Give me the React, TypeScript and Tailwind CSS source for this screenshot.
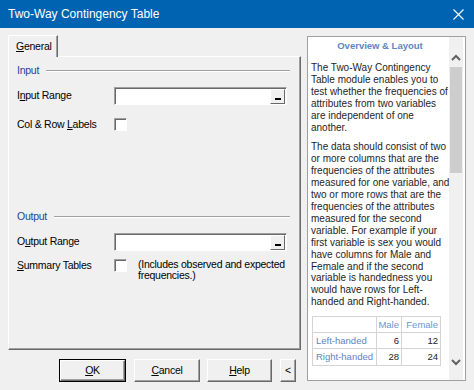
import React from "react";

const sans = { fontFamily: '"Liberation Sans", Arial, sans-serif' };

function Btn({ children, w, def }: { children: React.ReactNode; w: string; def?: boolean }) {
  const inner = (
    <div className="flex h-full w-full items-center justify-center border border-t-white border-l-white border-r-[#696969] border-b-[#696969] bg-[#f0f0f0] shadow-[inset_-1px_-1px_0_#a0a0a0]">
      {children}
    </div>
  );
  if (def) return <div className={`${w} h-[23px] border border-black`}>{inner}</div>;
  return <div className={`${w} h-[23px]`}>{inner}</div>;
}

function RangeBox() {
  return (
    <div className="flex h-[18px] w-[173px] items-center justify-end border border-t-[#a0a0a0] border-l-[#a0a0a0] border-r-white border-b-white bg-white shadow-[inset_1px_1px_0_#696969]">
      <div className="mr-[1px] flex h-[15px] w-[15px] items-end justify-center border border-t-white border-l-white border-r-[#696969] border-b-[#696969] bg-[#f0f0f0] pb-[3px]">
        <div className="h-[2px] w-[6px] bg-black" />
      </div>
    </div>
  );
}

function Check() {
  return (
    <div className="h-[13px] w-[13px] border border-t-[#a0a0a0] border-l-[#a0a0a0] border-r-white border-b-white bg-white shadow-[inset_1px_1px_0_#696969]" />
  );
}

function Heading({ t }: { t: string }) {
  return (
    <div className="flex h-[14px] items-center">
      <span className="text-[#24449b]">{t}</span>
      <div className="ml-[7px] flex-1 border-t border-b border-t-[#a0a0a0] border-b-white" />
    </div>
  );
}

export default function App() {
  const p1 = [
    "The Two-Way Contingency",
    "Table module enables you to",
    "test whether the frequencies of",
    "attributes from two variables",
    "are independent of one",
    "another.",
  ];
  const p2 = [
    "The data should consist of two",
    "or more columns that are the",
    "frequencies of the attributes",
    "measured for one variable, and",
    "two or more rows that are the",
    "frequencies of the attributes",
    "measured for the second",
    "variable. For example if your",
    "first variable is sex you would",
    "have columns for Male and",
    "Female and if the second",
    "variable is handedness you",
    "would have rows for Left-",
    "handed and Right-handed.",
  ];
  return (
    <div className="flex h-[390px] w-[474px] flex-col overflow-hidden bg-[#f0f0f0] text-[10.5px] tracking-[-0.25px] text-black" style={sans}>
      <div className="flex h-[28px] items-center justify-between bg-[#0063b1] pl-[8px] pr-[10px] text-white">
        <span className="text-[12px] tracking-normal">Two-Way Contingency Table</span>
        <svg width="11" height="11" viewBox="0 0 11 11">
          <path d="M0.5 0.5 L10.5 10.5 M10.5 0.5 L0.5 10.5" stroke="white" strokeWidth="1.1" />
        </svg>
      </div>
      <div className="flex gap-[6px] pl-[8px] pt-[7px]">
        <div className="flex w-[293px] flex-col">
          <div className="flex h-[21px]">
            <div className="relative z-10 flex h-[22px] w-[50px] items-center border-t border-l border-r border-t-white border-l-white border-r-[#696969] bg-[#f0f0f0] pl-[7px] shadow-[inset_-1px_0_0_#a0a0a0]">
              <span>
                <span className="underline">G</span>eneral
              </span>
            </div>
          </div>
          <div className="flex h-[294px] flex-col border border-t-white border-l-white border-r-[#696969] border-b-[#696969] pl-[8px] pr-[10px] shadow-[inset_-1px_-1px_0_#a0a0a0]">
            <div className="mt-[7px]">
              <Heading t="Input" />
            </div>
            <div className="mt-[9px] flex h-[18px] items-center">
              <span className="w-[97px]">
                I<span className="underline">n</span>put Range
              </span>
              <RangeBox />
            </div>
            <div className="mt-[13px] flex h-[13px] items-center">
              <span className="w-[97px]">
                Col &amp; Row <span className="underline">L</span>abels
              </span>
              <Check />
            </div>
            <div className="mt-[79px]">
              <Heading t="Output" />
            </div>
            <div className="mt-[9px] flex h-[18px] items-center">
              <span className="w-[97px]">
                O<span className="underline">u</span>tput Range
              </span>
              <RangeBox />
            </div>
            <div className="mt-[8px] flex items-start">
              <span className="w-[97px] leading-[12px]">
                <span className="underline">S</span>ummary Tables
              </span>
              <Check />
              <div className="ml-[11px] leading-[11px]">
                <div>(Includes observed and expected</div>
                <div>frequencies.)</div>
              </div>
            </div>
          </div>
          <div className="mt-[9px] flex">
            <div className="ml-[51px]">
              <Btn w="w-[67px]" def>
                <span>
                  <span className="underline">O</span>K
                </span>
              </Btn>
            </div>
            <div className="ml-[8px]">
              <Btn w="w-[66px]">
                <span>
                  <span className="underline">C</span>ancel
                </span>
              </Btn>
            </div>
            <div className="ml-[7px]">
              <Btn w="w-[65px]">
                <span>
                  <span className="underline">H</span>elp
                </span>
              </Btn>
            </div>
            <div className="ml-[8px]">
              <Btn w="w-[16px]">
                <span>&lt;</span>
              </Btn>
            </div>
          </div>
        </div>
        <div className="mt-[1px] flex h-[345px] w-[159px] border border-[#a0a0a0] bg-white tracking-normal">
          <div className="flex w-[141px] flex-col overflow-hidden pl-[3px] text-[10px] text-[#1e1e1e]">
            <div className="mt-[2px] h-[13px] whitespace-nowrap text-center text-[9.5px] font-bold leading-[13px] text-[#5b86c2]">
              Overview &amp; Layout
            </div>
            <div className="mt-[10px] leading-[11.9px]">
              {p1.map((l) => (
                <div key={l} className="whitespace-nowrap">{l}</div>
              ))}
            </div>
            <div className="mt-[8px] leading-[11.9px]">
              {p2.map((l) => (
                <div key={l} className="whitespace-nowrap">{l}</div>
              ))}
            </div>
            <div className="ml-[1px] mt-[8px] w-[129px] border border-[#d4d4d4] text-[9.5px]">
              <div className="flex h-[16px] border-b border-[#d4d4d4]">
                <div className="w-[64px] border-r border-[#d4d4d4]" />
                <div className="flex w-[25px] items-center justify-end whitespace-nowrap border-r border-[#d4d4d4] pr-[2px] text-[#6d95cc]">Male</div>
                <div className="flex flex-1 items-center justify-end whitespace-nowrap pr-[2px] text-[#6d95cc]">Female</div>
              </div>
              <div className="flex h-[16px] border-b border-[#d4d4d4]">
                <div className="flex w-[64px] items-center whitespace-nowrap border-r border-[#d4d4d4] pl-[3px] text-[#5a86c4]">Left-handed</div>
                <div className="flex w-[25px] items-center justify-end border-r border-[#d4d4d4] pr-[2px]">6</div>
                <div className="flex flex-1 items-center justify-end pr-[2px]">12</div>
              </div>
              <div className="flex h-[16px]">
                <div className="flex w-[64px] items-center whitespace-nowrap border-r border-[#d4d4d4] pl-[3px] text-[#5a86c4]">Right-handed</div>
                <div className="flex w-[25px] items-center justify-end border-r border-[#d4d4d4] pr-[2px]">28</div>
                <div className="flex flex-1 items-center justify-end pr-[2px]">24</div>
              </div>
            </div>
          </div>
          <div className="flex w-[14px] flex-col items-center bg-[#f0f0f0]">
            <svg className="mt-[17px]" width="10" height="7" viewBox="0 0 10 7">
              <polyline points="1,6 5,2 9,6" fill="none" stroke="#606060" strokeWidth="2" />
            </svg>
            <div className="mt-[6px] h-[106px] w-[12px] bg-[#cdcdcd]" />
            <div className="flex-1" />
            <svg className="mb-[14px]" width="10" height="7" viewBox="0 0 10 7">
              <polyline points="1,1 5,5 9,1" fill="none" stroke="#606060" strokeWidth="2" />
            </svg>
          </div>
        </div>
      </div>
    </div>
  );
}
